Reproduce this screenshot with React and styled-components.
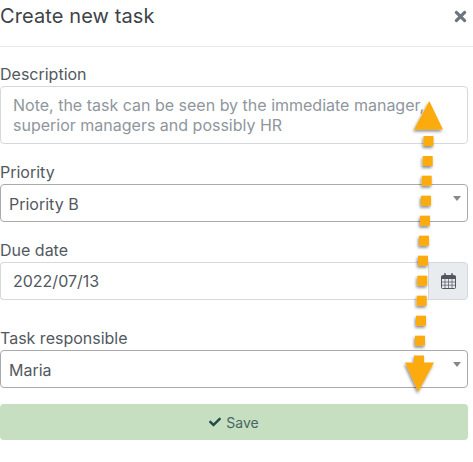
import React from "react";
import styled, { createGlobalStyle } from "styled-components";
import { FaCheck, FaTimes } from "react-icons/fa";

const GlobalStyle = createGlobalStyle`
  html, body {
    margin: 0;
    background: #fff;
    font-family: Inter, "Liberation Sans", sans-serif;
  }
`;

const Modal = styled.div`
  position: relative;
  width: 473px;
  height: 462px;
  overflow: hidden;
  color: #343a40;
`;

const Header = styled.div`
  display: flex;
  align-items: flex-start;
  justify-content: space-between;
  height: 47px;
  padding: 5px 4px 0 0;
  box-sizing: border-box;
  border-bottom: 1px solid #e9ecef;
  margin-bottom: 18px;
  h1 {
    margin: 0;
    font-size: 20px;
    line-height: 22px;
    font-weight: 400;
    letter-spacing: 0.1px;
    color: #3d4349;
  }
  svg {
    margin-top: 3px;
    color: #6c757d;
  }
`;

const Form = styled.div`
  display: flex;
  flex-direction: column;
  width: 468px;
`;

const Field = styled.div`
  margin-bottom: ${(p) => p.$gap}px;
`;

const Label = styled.div`
  font-size: 16px;
  line-height: 18px;
  margin-bottom: 3px;
  color: #525960;
`;

const TextArea = styled.div`
  height: 58px;
  box-sizing: border-box;
  border: 1px solid #d5d9dd;
  border-radius: 4px;
  padding: 8px 12px;
  font-size: 16px;
  line-height: 20px;
  color: #8f969d;
  white-space: nowrap;
`;

const Select = styled.div`
  position: relative;
  height: 38px;
  box-sizing: border-box;
  border: 1px solid #aaa;
  border-radius: 4px;
  padding: 0 8px;
  font-size: 16px;
  line-height: 38px;
  color: #525960;
  &::after {
    content: "";
    position: absolute;
    right: 6px;
    top: 11px;
    border-style: solid;
    border-width: 5px 4px 0;
    border-color: #888 transparent transparent;
  }
`;

const DateGroup = styled.div`
  display: flex;
  height: 38px;
`;

const DateInput = styled.div`
  flex: 1;
  box-sizing: border-box;
  border: 1px solid #d5d9dd;
  border-right: none;
  border-radius: 4px 0 0 4px;
  padding: 0 12px;
  font-size: 16px;
  line-height: 36px;
  color: #525960;
`;

const DateAddon = styled.div`
  display: flex;
  align-items: center;
  justify-content: center;
  width: 40px;
  box-sizing: border-box;
  border: 1px solid #d5d9dd;
  border-radius: 0 4px 4px 0;
  background: #e9ecef;
  color: #50575e;
`;

const SaveButton = styled.button`
  display: flex;
  align-items: center;
  justify-content: center;
  gap: 5px;
  width: 100%;
  height: 36px;
  border: none;
  border-radius: 4px;
  background: #c5dfc0;
  color: #4a6565;
  font-family: inherit;
  font-size: 14px;
  svg {
    color: #234a4a;
  }
`;

const Overlay = styled.svg`
  position: absolute;
  left: 0;
  top: 0;
  pointer-events: none;
`;

const dots = [
  [428.5, 141], [427.7, 161], [426.7, 180.7], [426, 200.7], [425, 220.7],
  [424, 240.7], [423, 260.7], [422.3, 280.7], [421.7, 300.7], [421, 320.7], [420, 340.7],
];

const CalendarIcon = () => (
  <svg width="15" height="16" viewBox="0 0 15 16" fill="none" stroke="currentColor">
    <rect x="0.5" y="2.5" width="14" height="13" rx="1" />
    <path d="M0.5 3.5h14v2h-14z" fill="currentColor" />
    <path d="M4 6v9.5M7.5 6v9.5M11 6v9.5M0.5 9h14M0.5 12.2h14" strokeWidth="0.7" />
    <path d="M4 0.8v3M11 0.8v3" strokeWidth="1.6" strokeLinecap="round" />
  </svg>
);

const App = () => (
  <Modal>
    <GlobalStyle />
    <Header>
      <h1>Create new task</h1>
      <FaTimes size={17} />
    </Header>
    <Form>
      <Field $gap={19}>
        <Label>Description</Label>
        <TextArea>
          Note, the task can be seen by the immediate manager,
          <br />
          superior managers and possibly HR
        </TextArea>
      </Field>
      <Field $gap={19}>
        <Label>Priority</Label>
        <Select>Priority B</Select>
      </Field>
      <Field $gap={29}>
        <Label>Due date</Label>
        <DateGroup>
          <DateInput>2022/07/13</DateInput>
          <DateAddon>
            <CalendarIcon />
          </DateAddon>
        </DateGroup>
      </Field>
      <Field $gap={16}>
        <Label>Task responsible</Label>
        <Select>Maria</Select>
      </Field>
      <SaveButton>
        <FaCheck size={12} />
        Save
      </SaveButton>
    </Form>
    <Overlay width="473" height="462" viewBox="0 0 473 462">
      <defs>
        <filter id="arrowShadow" x="-50%" y="-50%" width="200%" height="200%">
          <feDropShadow dx="-1" dy="2" stdDeviation="1.5" floodColor="#000" floodOpacity="0.45" />
        </filter>
      </defs>
      <g fill="#fbab0a" filter="url(#arrowShadow)">
        <polygon points="429.3,101 443,129.5 414,129.5" />
        {dots.map(([x, y]) => (
          <rect key={y} x={x - 5} y={y - 5} width="10" height="10" />
        ))}
        <polygon points="414,355.5 424,355.5 424,362.5 434,362.5 418.3,391.7 405,362.5 414,362.5" />
      </g>
    </Overlay>
  </Modal>
);

export default App;
